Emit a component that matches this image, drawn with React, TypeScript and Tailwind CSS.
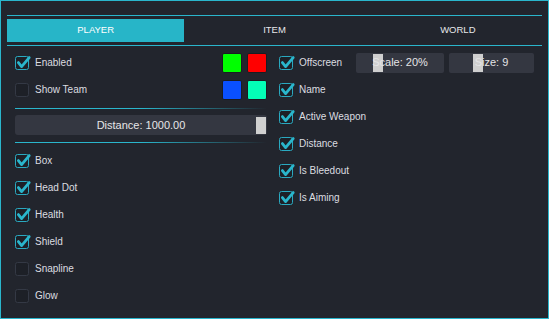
import React from "react";

const CYAN = "#2ab6cc";

const Check = ({ on }: { on: boolean }) => (
    <svg width="16" height="16" viewBox="0 0 16 16" className="shrink-0 overflow-visible">
        <rect
            x="0.5"
            y="1.5"
            width="13"
            height="13"
            rx="2"
            fill="#1d2027"
            stroke={on ? "#2aa9c0" : "#343945"}
            strokeWidth="1"
        />
        {on && (
            <path
                d="M3.4 7.6 L6.6 11.6 L14.2 2.6"
                fill="none"
                stroke={CYAN}
                strokeWidth="2.8"
                strokeLinecap="round"
                strokeLinejoin="round"
            />
        )}
    </svg>
);

const Row = ({ label, on, children }: { label: string; on: boolean; children?: React.ReactNode }) => (
    <div className="flex items-center h-[27px]">
        <Check on={on} />
        <span className="ml-[4px] text-[10px] text-[#dcdde0]">{label}</span>
        {children}
    </div>
);

const Swatch = ({ color }: { color: string }) => (
    <div className="w-[20px] h-[20px] rounded-[2px] border border-[#1a1c22]" style={{ background: color }} />
);

const MiniSlider = ({ label, width, thumb }: { label: string; width: string; thumb: string }) => (
    <div className={`relative h-[20px] bg-[#343741] rounded-[2px] flex items-center justify-center ${width}`}>
        <div className={`absolute top-[1px] bottom-[1px] w-[10px] bg-[#cfcfcf] ${thumb}`} />
        <span className="relative text-[11px] text-[#e4e4e6]">{label}</span>
    </div>
);

const App = () => {
    const left = [
        { name: "Box", on: true },
        { name: "Head Dot", on: true },
        { name: "Health", on: true },
        { name: "Shield", on: true },
        { name: "Snapline", on: false },
        { name: "Glow", on: false },
    ];
    const right = [
        { name: "Name", on: true },
        { name: "Active Weapon", on: true },
        { name: "Distance", on: true },
        { name: "Is Bleedout", on: true },
        { name: "Is Aiming", on: true },
    ];

    return (
        <div
            className="w-[549px] h-[319px] bg-[#22252d] border border-[#2ab6cc] px-[6px] pt-[14px] overflow-hidden"
            style={{ fontFamily: '"Liberation Sans", Arial, sans-serif' }}
        >
            <div className="h-px bg-[#2ab6cc]" />
            <div className="grid grid-cols-3 mt-[3px] h-[23px] text-[9.5px]">
                <div className="flex items-center justify-center bg-[#27b5c8] text-white mr-[1px]">PLAYER</div>
                <div className="flex items-center justify-center text-[#e6e7ea]">ITEM</div>
                <div className="flex items-center justify-center text-[#e6e7ea] pl-[10px]">WORLD</div>
            </div>
            <div className="h-px bg-[#2ab6cc] mt-[3px]" />

            <div className="flex pl-[8px] pt-[3px]">
                <div className="w-[252px] flex flex-col">
                    <Row label="Enabled" on={true}>
                        <div className="ml-auto flex gap-[5px]">
                            <Swatch color="#00ff00" />
                            <Swatch color="#ff0000" />
                        </div>
                    </Row>
                    <Row label="Show Team" on={false}>
                        <div className="ml-auto flex gap-[5px]">
                            <Swatch color="#0a50ff" />
                            <Swatch color="#04ffb6" />
                        </div>
                    </Row>
                    <div className="h-px mt-[5px] bg-gradient-to-r from-[#2ab6cc] via-[#2ab6cc] to-transparent" />
                    <div className="relative mt-[6px] h-[20px] bg-[#343741] rounded-[3px] flex items-center justify-center">
                        <span className="text-[11px] text-[#e6e6e8]">Distance: 1000.00</span>
                        <div className="absolute right-[1px] top-[2px] w-[10px] h-[17px] bg-[#d0d0d0]" />
                    </div>
                    <div className="h-px mt-[7px] bg-gradient-to-r from-[#2ab6cc] via-[#2ab6cc] to-transparent" />
                    <div className="mt-[4px] flex flex-col">
                        {left.map((item) => (
                            <Row key={item.name} label={item.name} on={item.on} />
                        ))}
                    </div>
                </div>

                <div className="ml-[12px] flex flex-col">
                    <div className="flex items-center h-[27px]">
                        <div className="w-[77px] flex items-center">
                            <Check on={true} />
                            <span className="ml-[4px] text-[10px] text-[#dcdde0]">Offscreen</span>
                        </div>
                        <div className="flex gap-[5px]">
                            <MiniSlider label="Scale: 20%" width="w-[88px]" thumb="left-[17px]" />
                            <MiniSlider label="Size: 9" width="w-[85px]" thumb="left-[24px]" />
                        </div>
                    </div>
                    {right.map((item) => (
                        <Row key={item.name} label={item.name} on={item.on} />
                    ))}
                </div>
            </div>
        </div>
    );
};

export default App;
